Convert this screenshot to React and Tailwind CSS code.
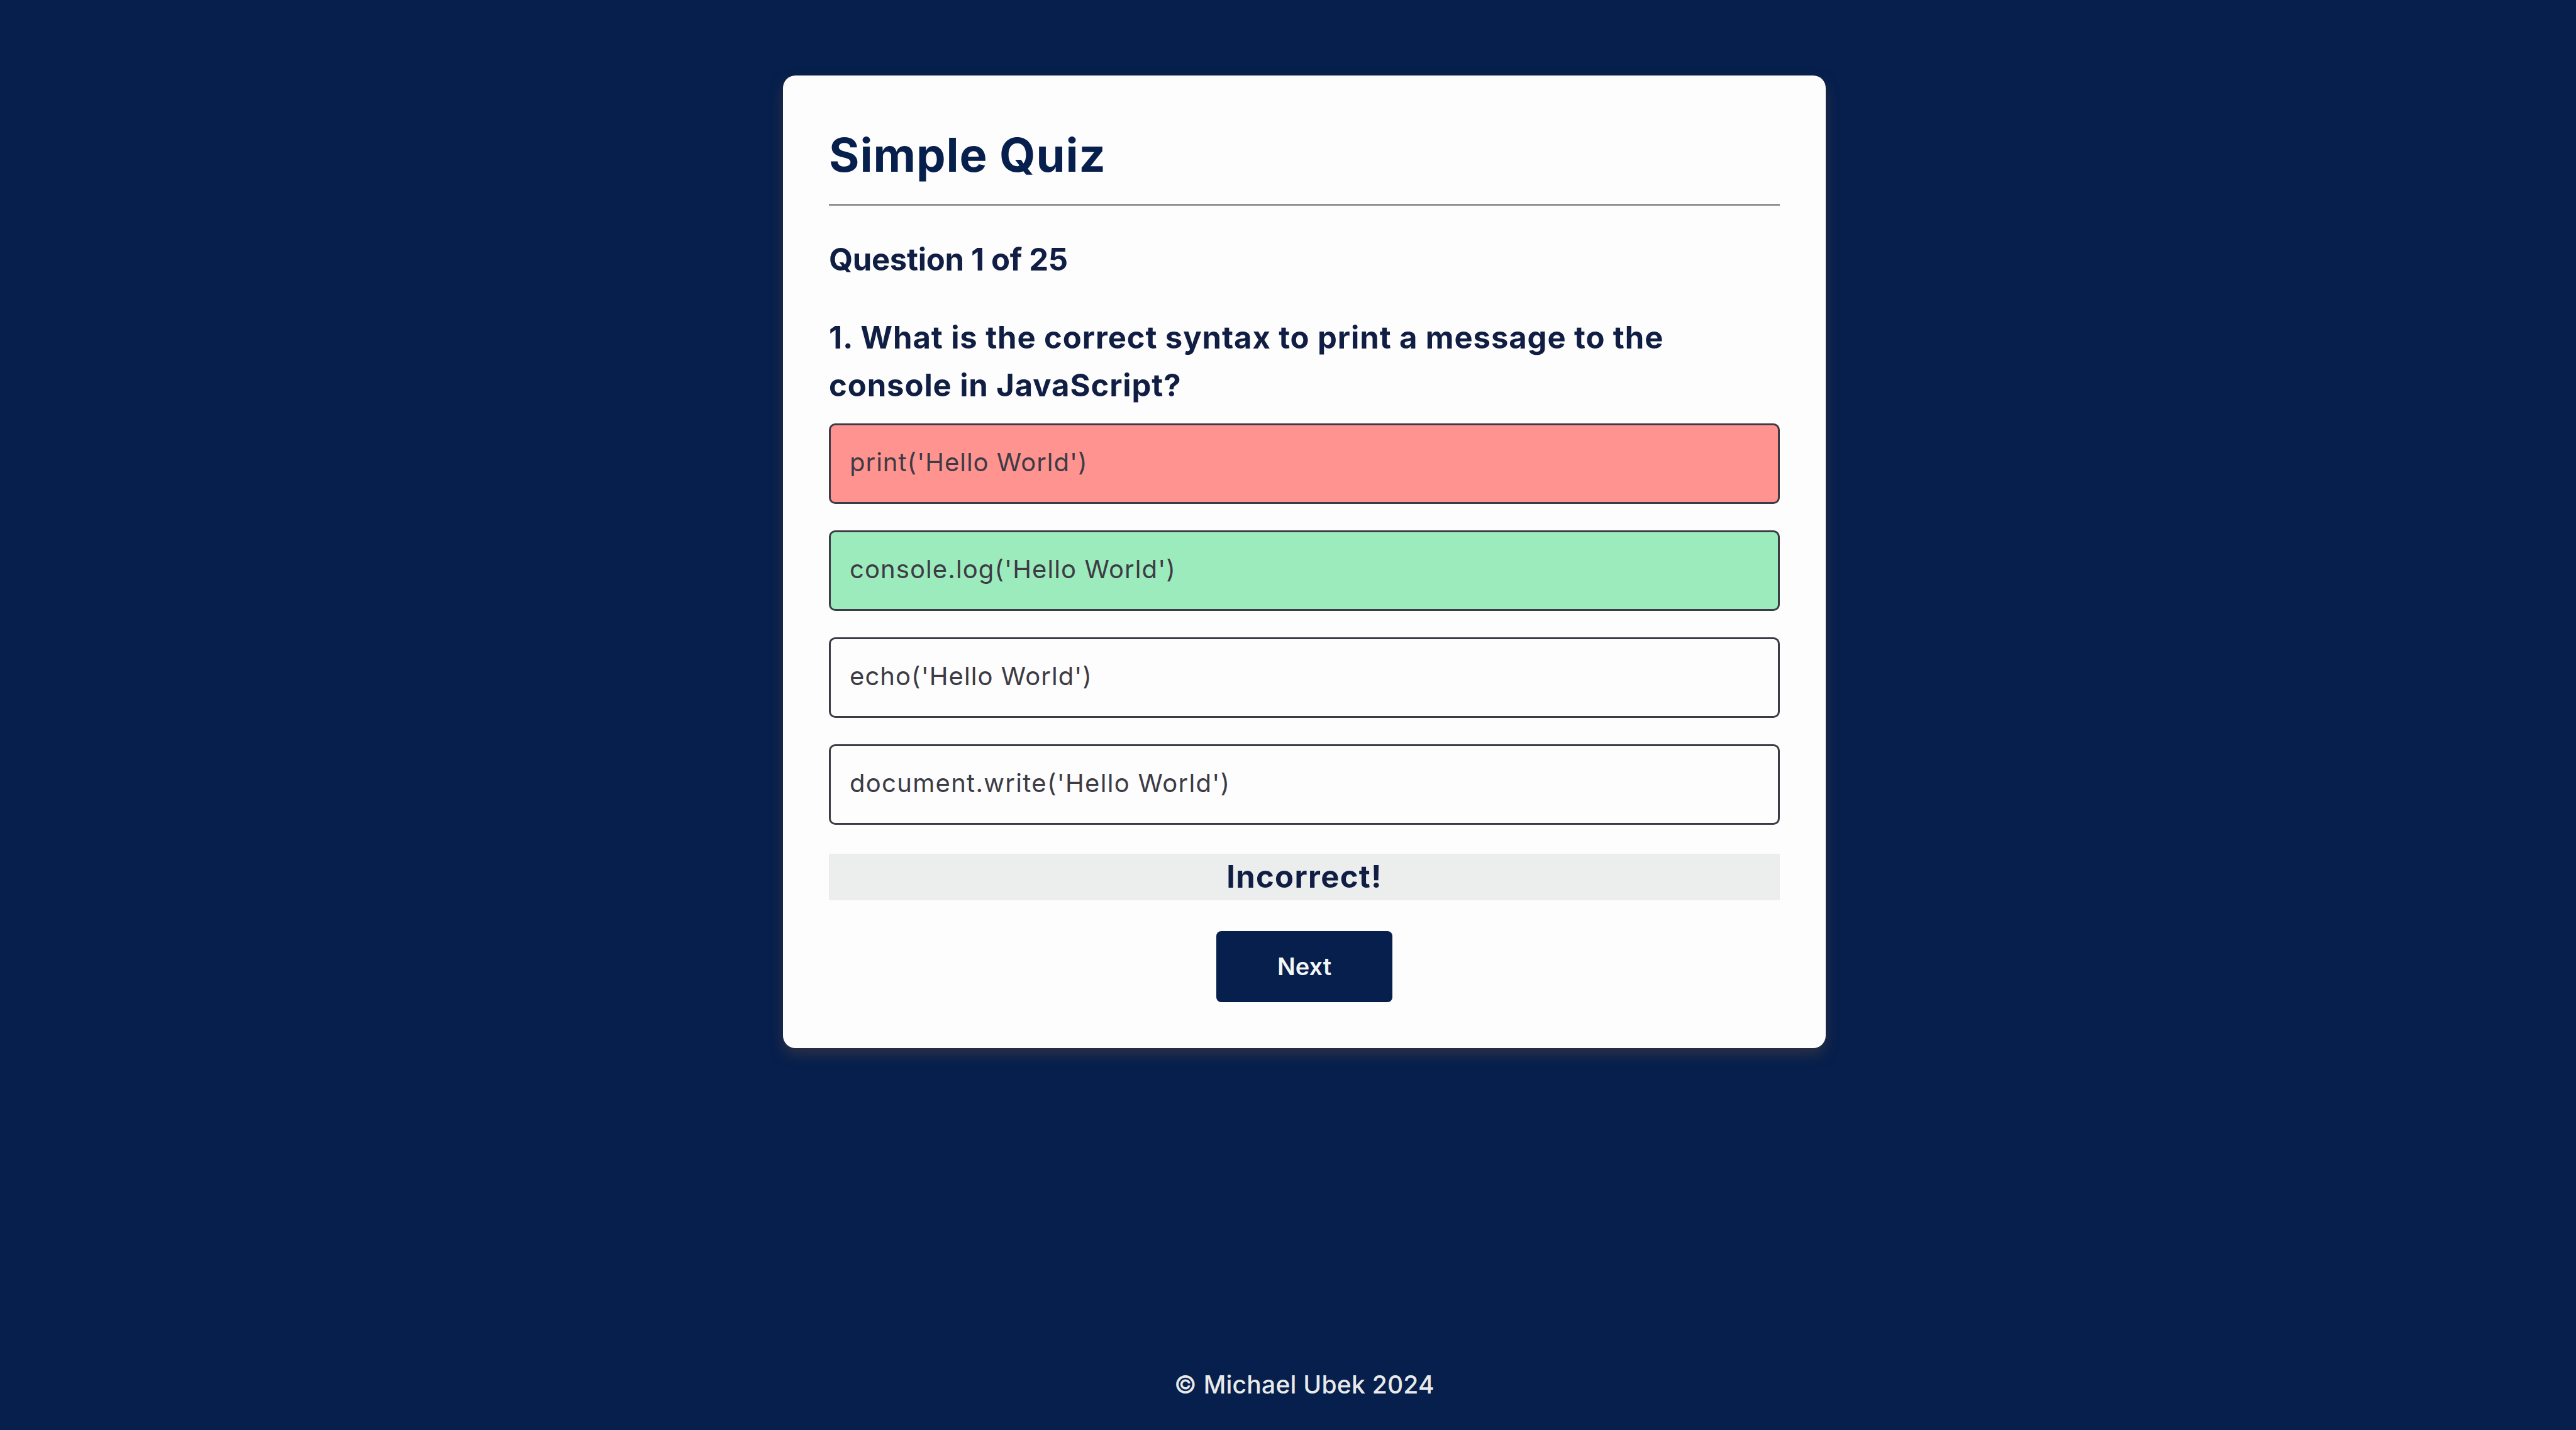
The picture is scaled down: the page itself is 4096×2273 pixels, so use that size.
import React from 'react';
import clsx from 'clsx';

const options = [
    { text: "print('Hello World')", state: 'wrong', spacing: 'tracking-[1px]' },
    { text: "console.log('Hello World')", state: 'correct', spacing: 'tracking-[1.1px]' },
    { text: "echo('Hello World')", state: 'idle', spacing: 'tracking-[1.06px]' },
    { text: "document.write('Hello World')", state: 'idle', spacing: 'tracking-[1.3px]' },
];

function Option({ text, state, spacing }) {
    return (
        <li
            className={clsx(
                'flex h-32 items-center rounded-[10px] border-3 border-[#3d3b45] pb-1 pl-[30px] text-[40px] text-[#3d3b45]',
                state === 'wrong' && 'bg-[#ff9390]',
                state === 'correct' && 'bg-[#9cebbc]'
            )}
        >
            <span className={clsx('whitespace-pre', spacing)}>{text}</span>
        </li>
    );
}

function App() {
    return (
        <div className="flex h-[2273px] w-[4096px] flex-col items-center justify-between overflow-hidden bg-[#071f4c] pt-[120px] pb-11 pl-[52px] font-['Inter',sans-serif] text-[#071f4c]">
            <main className="h-[1546px] w-[1658px] rounded-[20px] bg-[#fdfdfd] px-[73px] pt-[77px] shadow-[0_10px_20px_rgba(74,63,66,0.55)]">
                <h1 className="h-[100px] text-[74px] leading-[98px] font-bold tracking-[0.95px]">
                    Simple Quiz
                </h1>
                <hr className="mt-[27px] h-[3px] border-0 bg-[#8f9193]" />

                <h2 className="mt-12 h-[76px] text-[49px] leading-[75px] font-bold tracking-[-0.3px] text-[#101e44]">
                    Question 1 of 25
                </h2>
                <h2 className="mt-12 text-[49px] leading-[76.3px] font-bold tracking-[0.9px] whitespace-nowrap text-[#101e44]">
                    1. What is the correct syntax to print a message to the
                    <br />
                    console in JavaScript?
                </h2>

                <ul className="mt-[21px] flex flex-col gap-[42px]">
                    {options.map((option) => (
                        <Option key={option.text} {...option} />
                    ))}
                </ul>

                <p className="mt-[46px] h-[74px] bg-[#eceeed] text-center text-[49px] leading-[73px] font-bold tracking-[1.3px] text-[#101e44]">
                    Incorrect!
                </p>
                <button className="mx-auto mt-[49px] flex h-[113px] w-[280px] items-center justify-center rounded-lg bg-[#071f4c] text-[38px] font-semibold text-[#f5f6f6]">
                    Next
                </button>
            </main>

            <footer className="text-[39px] leading-[56px] font-medium tracking-[0.25px] text-[#e8eaea]">
                &copy; Michael Ubek 2024
            </footer>
        </div>
    );
}

export default App;
